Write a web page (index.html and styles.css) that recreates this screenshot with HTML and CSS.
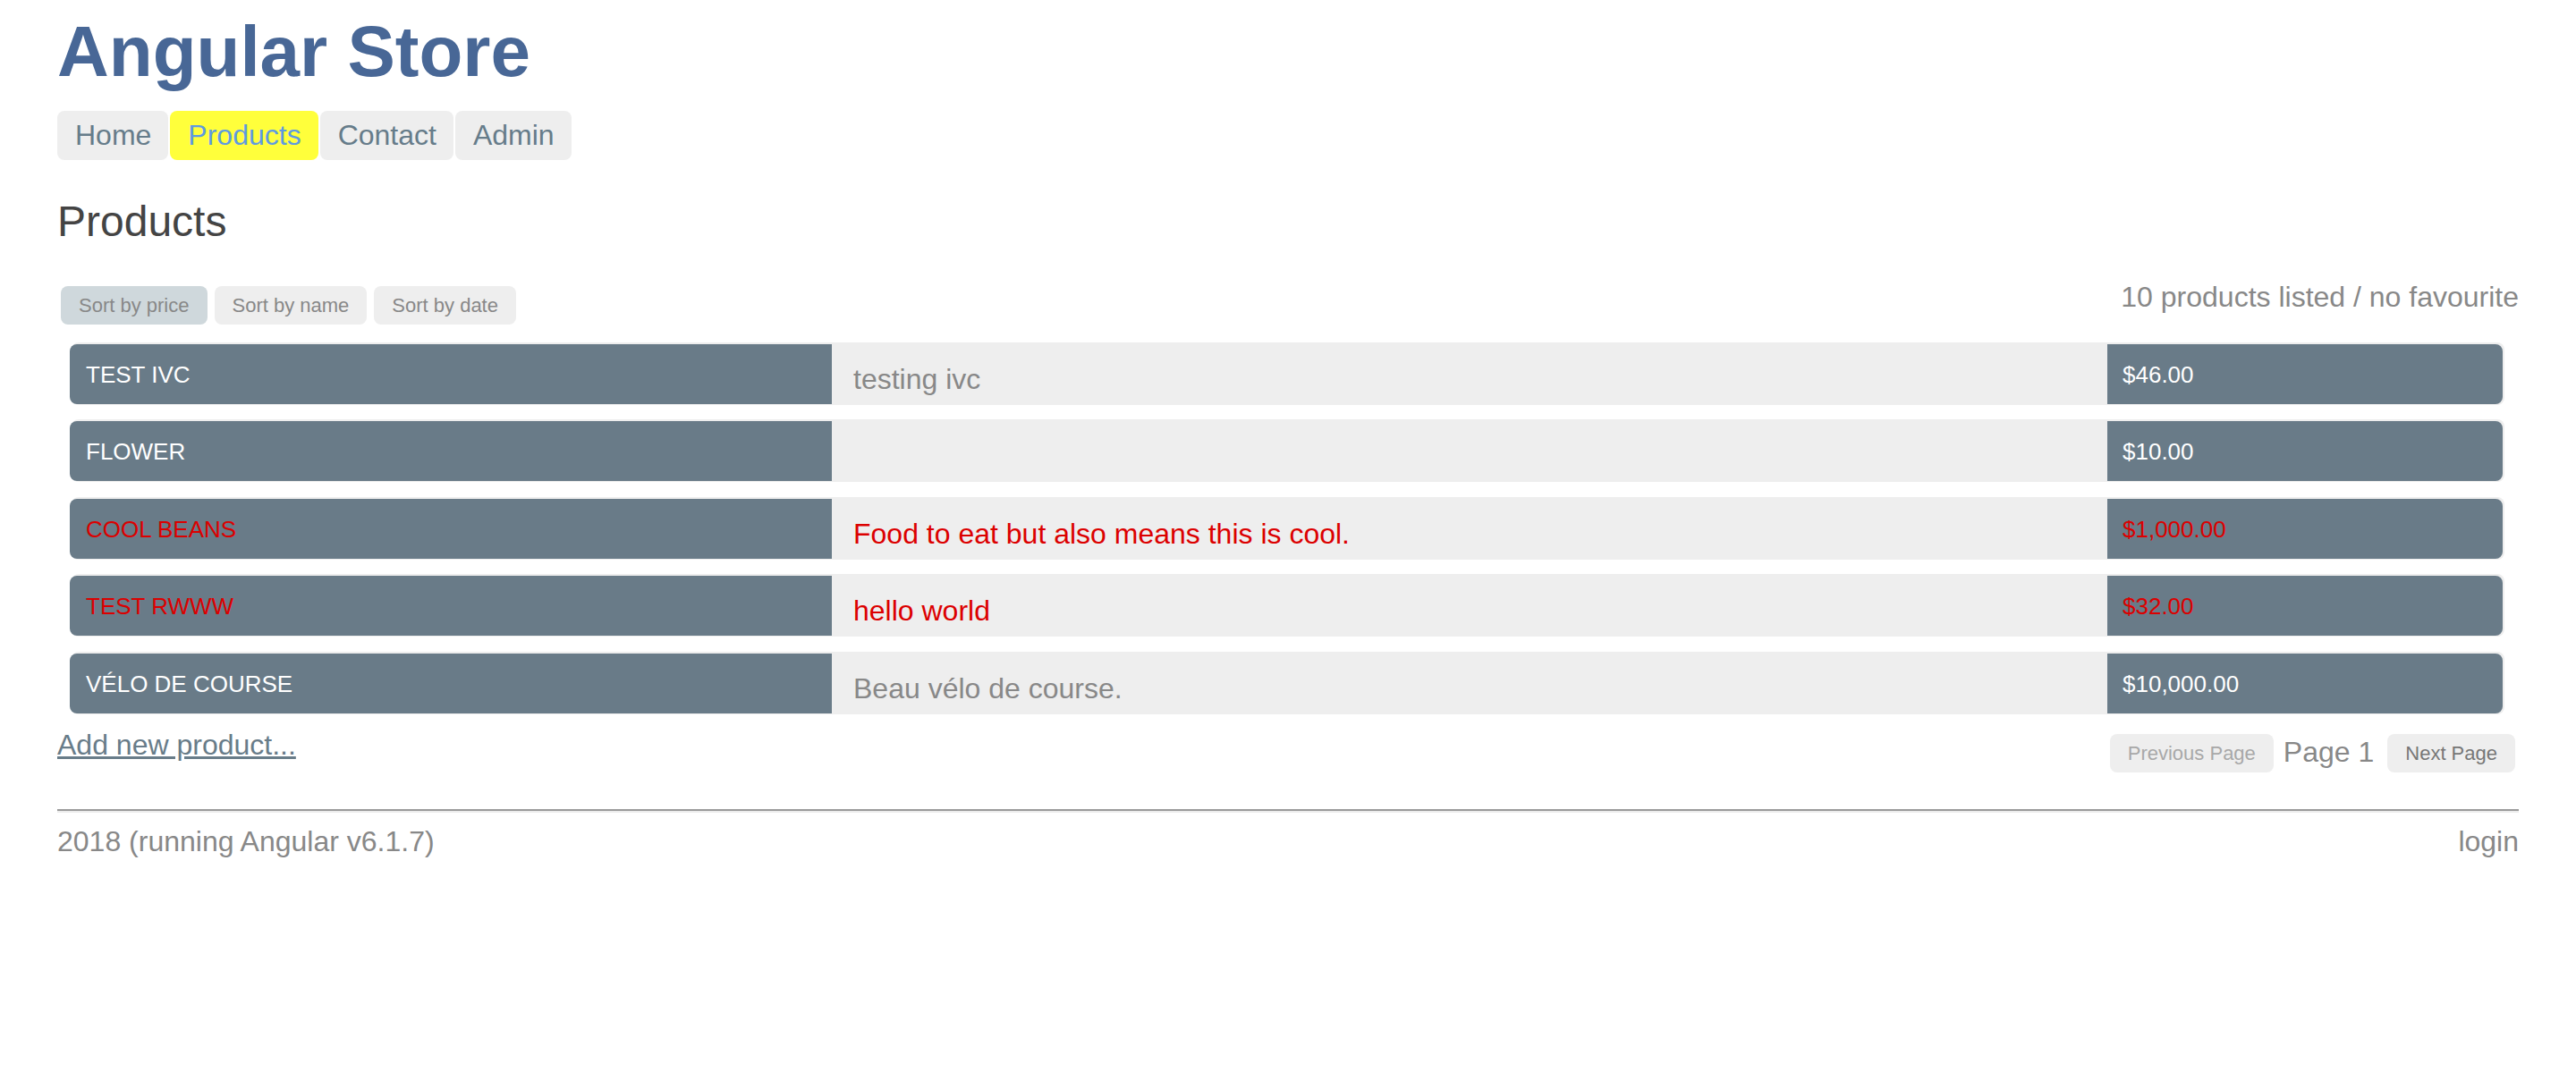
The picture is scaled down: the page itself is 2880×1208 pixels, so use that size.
FILE: index.html
```html
<!DOCTYPE html>
<html lang="en">
<head>
<meta charset="utf-8">
<title>Angular Store</title>
<link rel="stylesheet" href="styles.css">
</head>
<body>
<div class="page">
  <h1 class="title">Angular Store</h1>
  <nav class="nav">
    <a class="nav-link" href="#">Home</a>
    <a class="nav-link active" href="#">Products</a>
    <a class="nav-link" href="#">Contact</a>
    <a class="nav-link" href="#">Admin</a>
  </nav>

  <h2 class="heading">Products</h2>

  <div class="toolbar">
    <div class="sorts">
      <button class="btn btn-active">Sort by price</button>
      <button class="btn">Sort by name</button>
      <button class="btn">Sort by date</button>
    </div>
    <div class="count">10 products listed / no favourite</div>
  </div>

  <ul class="products">
    <li class="product">
      <span class="badge name">TEST IVC</span>
      <span class="desc">testing ivc</span>
      <span class="badge price">$46.00</span>
    </li>
    <li class="product">
      <span class="badge name">FLOWER</span>
      <span class="desc"></span>
      <span class="badge price">$10.00</span>
    </li>
    <li class="product hot">
      <span class="badge name">COOL BEANS</span>
      <span class="desc">Food to eat but also means this is cool.</span>
      <span class="badge price">$1,000.00</span>
    </li>
    <li class="product hot">
      <span class="badge name">TEST RWWW</span>
      <span class="desc">hello world</span>
      <span class="badge price">$32.00</span>
    </li>
    <li class="product">
      <span class="badge name">VÉLO DE COURSE</span>
      <span class="desc">Beau vélo de course.</span>
      <span class="badge price">$10,000.00</span>
    </li>
  </ul>

  <div class="bottombar">
    <a class="add-link" href="#">Add new product...</a>
    <div class="pager">
      <button class="btn btn-disabled">Previous Page</button>
      <span class="page-label">Page 1</span>
      <button class="btn btn-next">Next Page</button>
    </div>
  </div>

  <div class="rule"></div>

  <footer class="footer">
    <span>2018 (running Angular v6.1.7)</span>
    <span>login</span>
  </footer>
</div>
</body>
</html>
```

FILE: styles.css
```css
html, body {
  margin: 0;
  padding: 0;
  background: #ffffff;
}

body {
  font-family: "Liberation Sans", Arial, Helvetica, sans-serif;
  color: #888888;
}

.page {
  padding: 12px 64px 40px 64px;
}

.title {
  margin: 0;
  font-size: 80px;
  line-height: 92px;
  font-weight: bold;
  color: #486796;
}

.nav {
  display: flex;
  gap: 2px;
  margin-top: 20px;
}

.nav-link {
  display: block;
  padding: 10px 19px 10px 20px;
  font-size: 32px;
  line-height: 35px;
  background: #eeeeee;
  color: #667c8a;
  text-decoration: none;
  border-radius: 8px;
}

.nav-link.active {
  background: #ffff3b;
  color: #5e9ae2;
}

.heading {
  margin: 41px 0 0 0;
  font-size: 48px;
  line-height: 55px;
  font-weight: normal;
  color: #444444;
}

.toolbar {
  display: flex;
  justify-content: space-between;
  align-items: flex-start;
  margin-top: 45px;
}

.sorts {
  display: flex;
  gap: 8px;
  margin-left: 4px;
}

.btn {
  font-family: "Liberation Sans", Arial, Helvetica, sans-serif;
  font-size: 22px;
  line-height: 25px;
  padding: 9px 20px;
  border: none;
  border-radius: 8px;
  background: #eeeeee;
  color: #888888;
  margin: 0;
}

.btn-active {
  background: #cfd8dc;
}

.btn-disabled {
  color: #a8a8a8;
}

.btn-next {
  color: #777777;
}

.count {
  font-size: 32px;
  line-height: 37px;
  margin-top: -6px;
}

.products {
  list-style: none;
  margin: 20px 16px 0 16px;
  padding: 0;
  display: flex;
  flex-direction: column;
  gap: 16.4px;
}

.product {
  display: grid;
  grid-template-columns: 850px 1fr 444px;
  align-items: start;
  height: 70px;
  background: #eeeeee;
  border-radius: 8px;
}

.badge {
  display: block;
  box-sizing: border-box;
  height: 67px;
  margin-top: 2px;
  padding: 21px 18px 0 18px;
  font-size: 26px;
  line-height: 26px;
  color: #ffffff;
  background: #697b88;
}

.name {
  margin-left: -2px;
  border-radius: 8px 0 0 8px;
}

.price {
  margin-right: 2px;
  padding-left: 17px;
  border-radius: 0 8px 8px 0;
}

.desc {
  display: block;
  padding: 23px 24px 0 24px;
  font-size: 32px;
  line-height: 37px;
  color: #888888;
}

.hot .badge,
.hot .desc {
  color: #dc0000;
}

.bottombar {
  display: flex;
  justify-content: space-between;
  align-items: flex-start;
  margin-top: 16px;
}

.add-link {
  font-size: 32px;
  line-height: 37px;
  color: #687c89;
  text-decoration: underline;
}

.pager {
  display: flex;
  align-items: flex-start;
  margin-top: 6px;
  margin-right: 4px;
}

.page-label {
  font-size: 32px;
  line-height: 37px;
  margin: 2px 15px 0 11px;
  color: #888888;
}

.rule {
  margin-top: 41px;
  border-top: 2px solid #9a9a9a;
  border-bottom: 2px solid #ececec;
}

.footer {
  display: flex;
  justify-content: space-between;
  margin-top: 14px;
  font-size: 32px;
  line-height: 37px;
  color: #888888;
}
```
